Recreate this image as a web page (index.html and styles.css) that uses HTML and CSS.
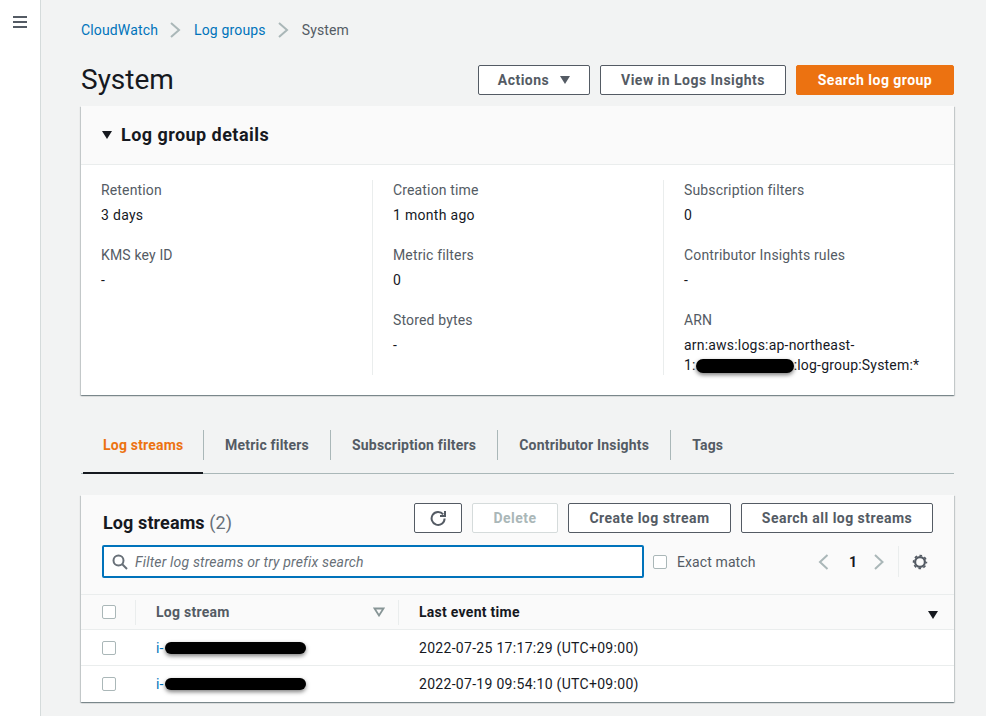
FILE: index.html
```html
<!DOCTYPE html>
<html lang="en">
<head>
<meta charset="utf-8">
<title>System</title>
<link rel="stylesheet" href="styles.css">
</head>
<body>
<div class="app">
  <aside class="side">
    <svg class="menu" width="16" height="16" viewBox="0 0 16 16"><path d="M1 3h14M1 8h14M1 13h14" stroke="#545b64" stroke-width="2" fill="none"/></svg>
  </aside>
  <main class="main">
    <nav class="crumbs">
      <a class="link">CloudWatch</a>
      <svg class="sep" width="12" height="16" viewBox="0 0 12 16"><path d="M2 1l8 7-8 7" stroke="#aab7b8" stroke-width="2" fill="none"/></svg>
      <a class="link">Log groups</a>
      <svg class="sep" width="12" height="16" viewBox="0 0 12 16"><path d="M2 1l8 7-8 7" stroke="#aab7b8" stroke-width="2" fill="none"/></svg>
      <span class="crumb-cur">System</span>
    </nav>
    <header class="head">
      <h1>System</h1>
      <div class="actions">
        <button class="btn btn-actions">Actions<span class="caret"></span></button>
        <button class="btn btn-insights">View in Logs Insights</button>
        <button class="btn btn-primary">Search log group</button>
      </div>
    </header>
    <section class="panel">
      <div class="panel-head"><span class="tri"></span><h2>Log group details</h2></div>
      <div class="cols">
        <div class="col">
          <div class="kv"><div class="k">Retention</div><div class="v">3 days</div></div>
          <div class="kv"><div class="k">KMS key ID</div><div class="v">-</div></div>
        </div>
        <div class="col">
          <div class="kv"><div class="k">Creation time</div><div class="v">1 month ago</div></div>
          <div class="kv"><div class="k">Metric filters</div><div class="v">0</div></div>
          <div class="kv"><div class="k">Stored bytes</div><div class="v">-</div></div>
        </div>
        <div class="col">
          <div class="kv"><div class="k">Subscription filters</div><div class="v">0</div></div>
          <div class="kv"><div class="k">Contributor Insights rules</div><div class="v">-</div></div>
          <div class="kv"><div class="k">ARN</div><div class="v v-arn">arn:aws:logs:ap-northeast-<br>1:<span class="redact redact-arn"></span>:log-group:System:*</div></div>
        </div>
      </div>
    </section>
    <div class="tabs">
      <span class="tab tab-on">Log streams</span>
      <span class="tab">Metric filters</span>
      <span class="tab">Subscription filters</span>
      <span class="tab">Contributor Insights</span>
      <span class="tab">Tags</span>
    </div>
    <section class="card">
      <div class="card-top">
        <div class="toolbar">
          <h2 class="card-title">Log streams <span class="count">(2)</span></h2>
          <div class="tools">
            <button class="btn btn-refresh"><svg width="16" height="16" viewBox="0 0 16 16"><path d="M13.2 4.400A6.500 6.500 0 1 0 14.600 8.500" stroke="#545b64" stroke-width="2" fill="none"/><path d="M15 1v5h-5" stroke="#545b64" stroke-width="2" fill="none"/></svg></button>
            <button class="btn btn-disabled">Delete</button>
            <button class="btn btn-create">Create log stream</button>
            <button class="btn btn-all">Search all log streams</button>
          </div>
        </div>
        <div class="filter-row">
          <div class="search">
            <svg width="16" height="16" viewBox="0 0 16 16"><circle cx="6.500" cy="6.500" r="5" stroke="#687078" stroke-width="2" fill="none"/><path d="M10 10l5 5" stroke="#687078" stroke-width="2"/></svg>
            <span class="placeholder">Filter log streams or try prefix search</span>
          </div>
          <label class="exact"><span class="check"></span>Exact match</label>
          <div class="pager">
            <svg width="12" height="16" viewBox="0 0 12 16"><path d="M10.500 1L3 8l7.500 7" stroke="#aab7b8" stroke-width="2" fill="none"/></svg>
            <span class="page">1</span>
            <svg width="12" height="16" viewBox="0 0 12 16"><path d="M2 1l7.500 7L2 15" stroke="#aab7b8" stroke-width="2" fill="none"/></svg>
          </div>
          <div class="gear">
            <svg width="16" height="16" viewBox="0 0 16 16"><circle cx="8" cy="8" r="4.900" stroke="#545b64" stroke-width="2.200" fill="none"/><circle cx="8" cy="8" r="6.500" stroke="#545b64" stroke-width="1.500" stroke-dasharray="2.700 2.405" stroke-dashoffset="1.350" fill="none"/></svg>
          </div>
        </div>
      </div>
      <div class="row row-head">
        <div class="c-check"><span class="check"></span></div>
        <div class="c-name">Log stream<svg class="sort" width="12" height="10" viewBox="0 0 12 10"><path d="M1.500 1.500h9L6 8.500z" stroke="#879596" stroke-width="1.800" fill="none"/></svg></div>
        <div class="c-time">Last event time<span class="sort-on"></span></div>
      </div>
      <div class="row">
        <div class="c-check"><span class="check"></span></div>
        <div class="c-name"><a class="link link-id">i-</a><span class="redact redact-row"></span></div>
        <div class="c-time">2022-07-25 17:17:29 (UTC+09:00)</div>
      </div>
      <div class="row">
        <div class="c-check"><span class="check"></span></div>
        <div class="c-name"><a class="link link-id">i-</a><span class="redact redact-row"></span></div>
        <div class="c-time">2022-07-19 09:54:10 (UTC+09:00)</div>
      </div>
    </section>
  </main>
</div>
</body>
</html>
```
FILE: styles.css
```css
* { box-sizing: border-box; }
html, body { margin: 0; height: 100%; }
body {
  font-family: Roboto, "Noto Sans", sans-serif;
  font-size: 14px;
  line-height: 20px;
  letter-spacing: 0.15px;
  color: #16191f;
  background: #f2f3f3;
  overflow: hidden;
}
.app { display: flex; height: 716px; overflow: hidden; }
.side {
  width: 41px;
  flex: none;
  background: #fff;
  border-right: 1px solid #d5dbdb;
  padding: 14px 0 0 12px;
}
.menu { display: block; }
.main { flex: 1; padding: 20px 32px 0 40px; min-width: 0; }
.link { color: #0073bb; }
.link-id { width: 9px; flex: none; }
.crumbs { display: flex; align-items: center; height: 20px; color: #545b64; }
.sep { margin: 0 13px 0 11px; }
.head { display: flex; justify-content: space-between; align-items: center; height: 30px; margin-top: 25px; }
h1 { margin: 0; font-size: 28px; font-weight: 400; line-height: 30px; letter-spacing: 0; }
.actions { display: flex; gap: 10px; }
.btn {
  height: 30px;
  font: 700 14px/20px Roboto, "Noto Sans", sans-serif;
  letter-spacing: 0.47px;
  color: #545b64;
  background: #fff;
  border: 1px solid #545b64;
  border-radius: 2px;
  padding: 0;
  display: inline-flex;
  align-items: center;
  justify-content: center;
}
.btn-actions { width: 112px; gap: 11px; }
.caret { width: 0; height: 0; border-left: 5px solid transparent; border-right: 5px solid transparent; border-top: 8px solid #545b64; }
.btn-insights { width: 186px; }
.btn-primary { width: 158px; background: #ec7211; border-color: #ec7211; color: #fff; }
.panel {
  margin-top: 11px;
  height: 289px;
  background: #fff;
  box-shadow: 0 1px 1px 0 rgba(0,28,36,.3), 1px 1px 1px 0 rgba(0,28,36,.15), -1px 1px 1px 0 rgba(0,28,36,.15);
}
.panel-head {
  height: 59px;
  display: flex;
  align-items: center;
  padding-left: 21px;
  gap: 9px;
  background: #fafafa;
  border-bottom: 1px solid #eaeded;
}
.tri { width: 0; height: 0; border-left: 5px solid transparent; border-right: 5px solid transparent; border-top: 8px solid #16191f; }
.panel-head h2 { margin: 0; font-size: 18px; line-height: 22px; font-weight: 700; letter-spacing: 0.45px; }
.cols { display: grid; grid-template-columns: 291px 291px 1fr; padding-top: 15px; }
.col { padding: 0 20px; height: 195px; border-left: 1px solid #eaeded; }
.col:first-child { border-left: 0; }
.kv { margin-bottom: 20px; }
.k { color: #545b64; height: 20px; margin-bottom: 5px; }
.v { color: #16191f; height: 20px; line-height: 20px; white-space: nowrap; letter-spacing: 0.3px; }
.v-arn { letter-spacing: 0.2px; }
.redact { display: inline-block; background: #000; border-radius: 7px; vertical-align: middle; box-shadow: 0 2px 4px rgba(0,0,0,.5); }
.redact-arn { width: 98px; height: 14px; }
.redact-row { width: 141px; height: 12px; }
.tabs {
  margin-top: 35px;
  height: 44px;
  display: flex;
  align-items: flex-start;
  border-bottom: 1px solid #aab7b8;
}
.tab {
  height: 30px;
  line-height: 30px;
  padding: 0 21px;
  font-weight: 700;
  letter-spacing: 0.2px;
  color: #545b64;
  border-left: 1px solid #aab7b8;
}
.tab:first-child { border-left: 0; margin-left: 2px; }
.tab-on { color: #ec7211; position: relative; width: 120px; padding: 0 0 0 20px; }
.tab-on::after { content: ""; position: absolute; left: 0; right: 0; top: 42px; height: 2px; background: #16191f; }
.card {
  margin-top: 21px;
  height: 207px;
  background: #fff;
  box-shadow: 0 1px 1px 0 rgba(0,28,36,.3), 1px 1px 1px 0 rgba(0,28,36,.15), -1px 1px 1px 0 rgba(0,28,36,.15);
}
.card-top { height: 100px; background: #fafafa; border-bottom: 1px solid #eaeded; padding: 8px 21px 0; }
.toolbar { display: flex; justify-content: space-between; align-items: center; height: 30px; }
.card-title { margin: 0 0 0 1px; font-size: 18px; line-height: 22px; font-weight: 700; padding-top: 10px; letter-spacing: 0.1px; }
.count { font-weight: 400; color: #687078; }
.tools { display: flex; gap: 10px; }
.btn-refresh { width: 48px; }
.btn-disabled { width: 86px; border-color: #d5dbdb; color: #aab7b8; }
.btn-create { width: 163px; }
.btn-all { width: 192px; }
.filter-row { display: flex; align-items: center; margin-top: 12px; height: 33px; }
.search {
  width: 542px;
  height: 33px;
  flex: none;
  background: #fff;
  border: 2px solid #0073bb;
  border-radius: 2px;
  display: flex;
  align-items: center;
  padding-left: 8px;
  gap: 7px;
}
.placeholder { font-style: italic; color: #687078; letter-spacing: 0.18px; }
.exact { display: flex; align-items: center; gap: 10px; margin-left: 9px; color: #545b64; width: 161px; flex: none; letter-spacing: 0.1px; }
.check { display: block; width: 14px; height: 14px; background: #fff; border: 1px solid #aab7b8; border-radius: 2px; flex: none; }
.pager { display: flex; align-items: center; width: 81px; flex: none; margin-left: 3px; }
.page { font-weight: 700; width: 8px; margin: 0 16px 0 20px; }
.gear { flex: none; border-left: 1px solid #eaeded; height: 31px; padding: 8px 0 0 13px; width: 30px; }
.gear svg { display: block; }
.row { display: flex; align-items: center; height: 36px; border-bottom: 1px solid #eaeded; }
.row:last-child { border-bottom: 0; }
.row-head { height: 35px; background: #fafafa; font-weight: 700; letter-spacing: 0.27px; }
.c-check { width: 75px; flex: none; padding-left: 21px; }
.c-name { width: 242px; flex: none; display: flex; align-items: center; }
.c-time { flex: 1; padding-left: 21px; padding-right: 16px; display: flex; justify-content: space-between; align-items: center; letter-spacing: 0.3px; }
.row-head .c-name { color: #545b64; justify-content: space-between; padding-right: 13px; }
.row-head .c-time { color: #16191f; border-left: 1px solid #eaeded; height: 25px; padding-left: 20px; letter-spacing: 0.27px; }
.row-head .c-check { height: 25px; display: flex; align-items: center; border-right: 1px solid #eaeded; width: 55px; margin-right: 20px; }
.sort-on { width: 0; height: 0; border-left: 5px solid transparent; border-right: 5px solid transparent; border-top: 8px solid #16191f; margin-top: 5px; }
```
